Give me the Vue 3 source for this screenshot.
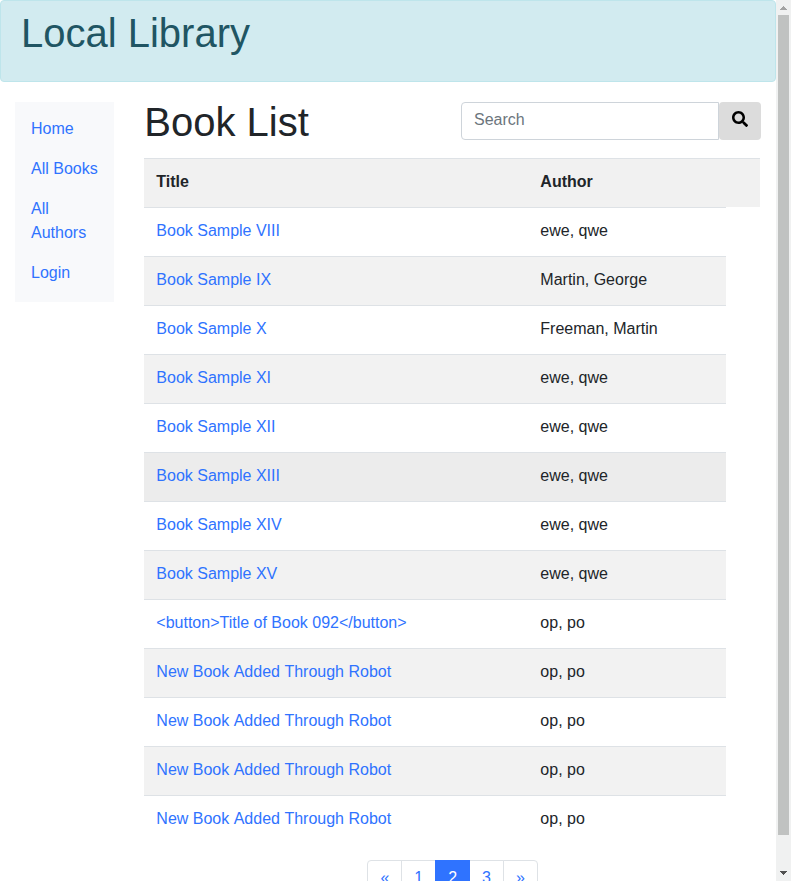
<script setup>
const links = ['Home', 'All Books', 'All Authors', 'Login']
const books = [
  ['Book Sample VIII', 'ewe, qwe'],
  ['Book Sample IX', 'Martin, George'],
  ['Book Sample X', 'Freeman, Martin'],
  ['Book Sample XI', 'ewe, qwe'],
  ['Book Sample XII', 'ewe, qwe'],
  ['Book Sample XIII', 'ewe, qwe'],
  ['Book Sample XIV', 'ewe, qwe'],
  ['Book Sample XV', 'ewe, qwe'],
  ['<button>Title of Book 092</button>', 'op, po'],
  ['New Book Added Through Robot', 'op, po'],
  ['New Book Added Through Robot', 'op, po'],
  ['New Book Added Through Robot', 'op, po'],
  ['New Book Added Through Robot', 'op, po'],
]
const pages = ['«', '1', '2', '3', '»']
</script>

<template>
  <div class="window">
    <div class="page">
      <header class="banner"><h1>Local Library</h1></header>
      <div class="layout">
        <nav class="sidebar">
          <a v-for="l in links" :key="l" href="#">{{ l }}</a>
        </nav>
        <main class="content">
          <div class="heading">
            <h1>Book List</h1>
            <form class="search" @submit.prevent>
              <input type="text" placeholder="Search" />
              <button type="submit" aria-label="Search">
                <svg viewBox="0 0 512 512" width="16" height="16">
                  <path d="M505 442.700 405.300 343c-4.500-4.500-10.600-7-17-7H372c27.600-35.300 44-79.700 44-128C416 93.100 322.900 0 208 0S0 93.100 0 208s93.100 208 208 208c48.300 0 92.700-16.400 128-44v16.300c0 6.400 2.500 12.500 7 17l99.700 99.700c9.400 9.400 24.600 9.400 33.900 0l28.300-28.300c9.400-9.400 9.400-24.600.1-34zM208 336c-70.700 0-128-57.200-128-128 0-70.700 57.200-128 128-128 70.700 0 128 57.200 128 128 0 70.700-57.200 128-128 128z" />
                </svg>
              </button>
            </form>
          </div>
          <div class="table">
            <div class="row head"><span>Title</span><span>Author</span></div>
            <div
              v-for="(b, i) in books"
              :key="i"
              class="row"
              :class="{ striped: i % 2 === 1, hovered: i === 5 }"
            >
              <a href="#" :class="{ unkerned: b[0].includes('Added') }">{{ b[0] }}</a>
              <span>{{ b[1] }}</span>
            </div>
          </div>
          <div class="pagination">
            <a v-for="p in pages" :key="p" href="#" :class="{ active: p === '2' }">{{ p }}</a>
          </div>
        </main>
      </div>
    </div>
    <div class="scrollbar">
      <svg class="arrow" viewBox="0 0 15 15" width="15" height="15" shape-rendering="crispEdges">
        <path fill="#a3a3a3" d="M7 6h1v1h1v1h1v1h1v1H4V9h1V8h1V7h1z" />
      </svg>
      <div class="thumb"></div>
      <svg class="arrow" viewBox="0 0 15 15" width="15" height="15" shape-rendering="crispEdges">
        <path fill="#505050" d="M4 5h7v1h-1v1H9v1H8v1H7V8H6V7H5V6H4z" />
      </svg>
    </div>
  </div>
</template>

<style>
body {
  margin: 0;
  overflow: hidden;
}
</style>

<style scoped>
.window {
  display: flex;
  height: 881px;
  overflow: hidden;
  background: #fff;
  color: #212529;
  font: 16px/24px "Liberation Sans", Arial, sans-serif;
}
.window * {
  box-sizing: border-box;
}
a {
  color: #2f73ff;
  text-decoration: none;
}
h1 {
  margin: 0;
  font-size: 40px;
  font-weight: 400;
  line-height: 48px;
}
.page {
  width: 776px;
  flex: none;
}
.banner {
  height: 82px;
  padding: 8px 20px;
  border: 1px solid #bee5eb;
  border-radius: 4px;
  background: #d2ebf0;
  color: #205563;
}
.layout {
  display: flex;
  align-items: flex-start;
  gap: 30px;
  padding: 20px 15px 0;
}
.sidebar {
  display: flex;
  flex-direction: column;
  width: 99.33px;
  height: 200px;
  padding-top: 7px;
  background: #f8f9fb;
}
.sidebar a {
  padding: 8px 16px;
}
.content {
  flex: 1;
  min-width: 0;
}
.heading {
  display: flex;
  justify-content: space-between;
  height: 56px;
}
.heading h1 {
  margin-top: -4px;
}
.search {
  display: flex;
  width: 300px;
  height: 38px;
}
.search input {
  width: 258px;
  padding: 4px 12px 6px;
  border: 1px solid #ced4da;
  border-radius: 4px 0 0 4px;
  background: #fff;
  font: inherit;
}
.search input::placeholder {
  color: #6c757d;
  opacity: 1;
}
.search button {
  display: flex;
  justify-content: center;
  width: 42px;
  padding: 9px 0 0;
  border: 0;
  border-radius: 4px;
  background: #dcdcdc;
}
.row {
  display: grid;
  grid-template-columns: 384px 1fr;
  width: 582px;
  height: 49px;
  padding: 11px 12px 0;
  border-top: 1px solid #dee2e6;
}
.unkerned {
  font-kerning: none;
}
.striped {
  background: #f2f2f2;
}
.hovered {
  background: #ececec;
}
.head {
  width: 616px;
  background: #f1f1f1;
  font-weight: 700;
}
.pagination {
  display: flex;
  justify-content: center;
  padding: 16px 0 0;
}
.pagination a {
  margin-left: -1px;
  padding: 7px 12px 9px;
  border: 1px solid #dee2e6;
  background: #fff;
  line-height: 20px;
}
.pagination a:first-child {
  margin-left: 0;
  border-radius: 4px 0 0 4px;
}
.pagination a:last-child {
  border-radius: 0 4px 4px 0;
}
.pagination .active {
  position: relative;
  border-color: #2f73ff;
  background: #2f73ff;
  color: #fff;
}
.scrollbar {
  display: flex;
  flex-direction: column;
  width: 15px;
  background: #f0f1f1;
}
.thumb {
  width: 11px;
  height: 820px;
  margin: 0 2px 31px;
  background: #c0c2c1;
}
.arrow {
  display: block;
  flex: none;
}
</style>
